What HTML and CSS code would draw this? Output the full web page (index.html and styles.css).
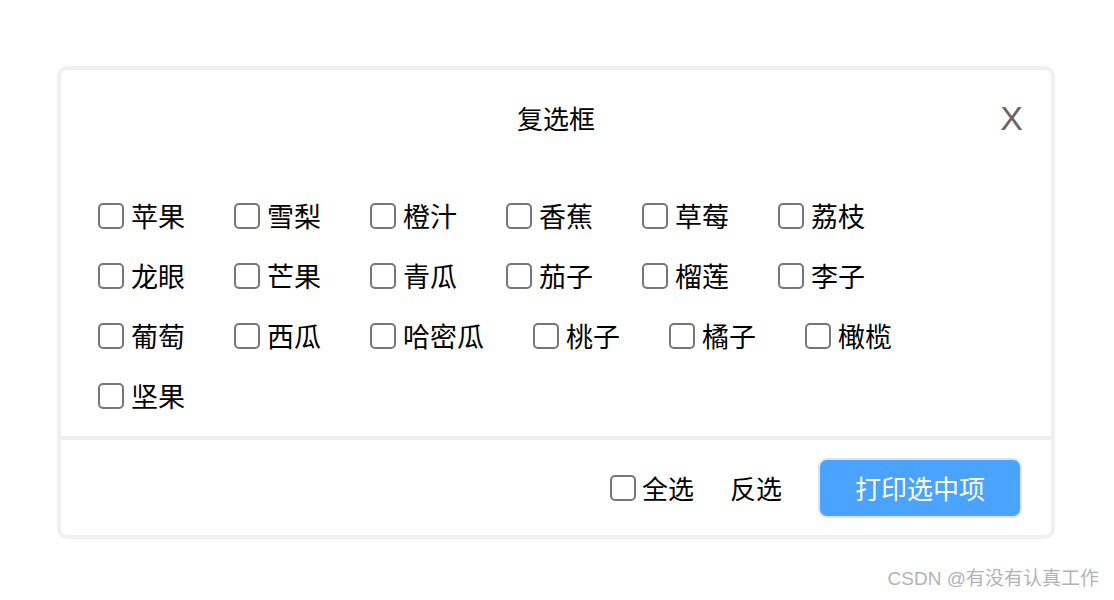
FILE: index.html
```html
<!DOCTYPE html>
<html lang="zh-CN">
<head>
  <meta charset="UTF-8">
  <title>复选框</title>
  <link rel="stylesheet" href="styles.css">
</head>
<body>
  <div class="dialog">
    <div class="dialog-header">
      <span class="dialog-title">复选框</span>
      <span class="dialog-close">X</span>
    </div>
    <div class="dialog-body">
      <div class="list">
        <label class="item"><span class="box"></span>苹果</label>
        <label class="item"><span class="box"></span>雪梨</label>
        <label class="item"><span class="box"></span>橙汁</label>
        <label class="item"><span class="box"></span>香蕉</label>
        <label class="item"><span class="box"></span>草莓</label>
        <label class="item"><span class="box"></span>荔枝</label>
        <label class="item"><span class="box"></span>龙眼</label>
        <label class="item"><span class="box"></span>芒果</label>
        <label class="item"><span class="box"></span>青瓜</label>
        <label class="item"><span class="box"></span>茄子</label>
        <label class="item"><span class="box"></span>榴莲</label>
        <label class="item"><span class="box"></span>李子</label>
        <label class="item"><span class="box"></span>葡萄</label>
        <label class="item"><span class="box"></span>西瓜</label>
        <label class="item"><span class="box"></span>哈密瓜</label>
        <label class="item"><span class="box"></span>桃子</label>
        <label class="item"><span class="box"></span>橘子</label>
        <label class="item"><span class="box"></span>橄榄</label>
        <label class="item"><span class="box"></span>坚果</label>
      </div>
    </div>
    <div class="dialog-footer">
      <label class="item item-all"><span class="box"></span>全选</label>
      <span class="invert">反选</span>
      <button class="btn-print">打印选中项</button>
    </div>
  </div>
  <div class="watermark">CSDN @有没有认真工作</div>
</body>
</html>
```

FILE: styles.css
```css
* {
  margin: 0;
  padding: 0;
  box-sizing: border-box;
}

body {
  background-color: #ffffff;
  color: #000000;
  font-family: "Noto Sans CJK SC", "Noto Sans", sans-serif;
}

.dialog {
  width: 998px;
  height: 473px;
  margin: 66px 0 0 57px;
  border: 4px solid #f0f0f0;
  border-radius: 10px;
  display: flex;
  flex-direction: column;
}

.dialog-header {
  position: relative;
  height: 96px;
  display: flex;
  align-items: center;
  justify-content: center;
}

.dialog-title {
  font-size: 26px;
  line-height: 30px;
}

.dialog-close {
  position: absolute;
  top: 30px;
  right: 28px;
  font-family: "Liberation Sans", sans-serif;
  font-size: 34px;
  line-height: 36px;
  color: #666666;
  cursor: pointer;
}

.dialog-body {
  height: 270px;
  padding: 20px 0 0 37px;
}

.list {
  max-width: 880px;
  display: flex;
  flex-wrap: wrap;
  align-content: flex-start;
}

.item {
  display: flex;
  align-items: center;
  height: 60px;
  margin-right: 49px;
  font-size: 27px;
  line-height: 30px;
  cursor: pointer;
}

.box {
  width: 26px;
  height: 26px;
  border: 2px solid #767676;
  border-radius: 5px;
  margin-right: 7px;
}

.dialog-footer {
  flex: 1;
  border-top: 4px solid #f0f0f0;
  display: flex;
  align-items: center;
  justify-content: flex-end;
  padding-right: 29px;
}

.item-all {
  margin-right: 36px;
  font-size: 26px;
}

.item-all .box {
  margin-right: 6px;
}

.invert {
  font-size: 26px;
  line-height: 30px;
  margin-right: 36px;
  cursor: pointer;
}

.btn-print {
  width: 204px;
  height: 60px;
  background-color: #4aa3fe;
  color: #ffffff;
  border: 2px solid #dfe3ea;
  border-radius: 9px;
  font-family: "Noto Sans CJK SC", sans-serif;
  font-size: 26px;
  cursor: pointer;
}

.watermark {
  margin-top: 28px;
  padding-right: 15px;
  text-align: right;
  font-family: "Liberation Sans", "Noto Sans CJK SC", sans-serif;
  font-size: 19px;
  line-height: 24px;
  color: #b3b3b3;
}
```
